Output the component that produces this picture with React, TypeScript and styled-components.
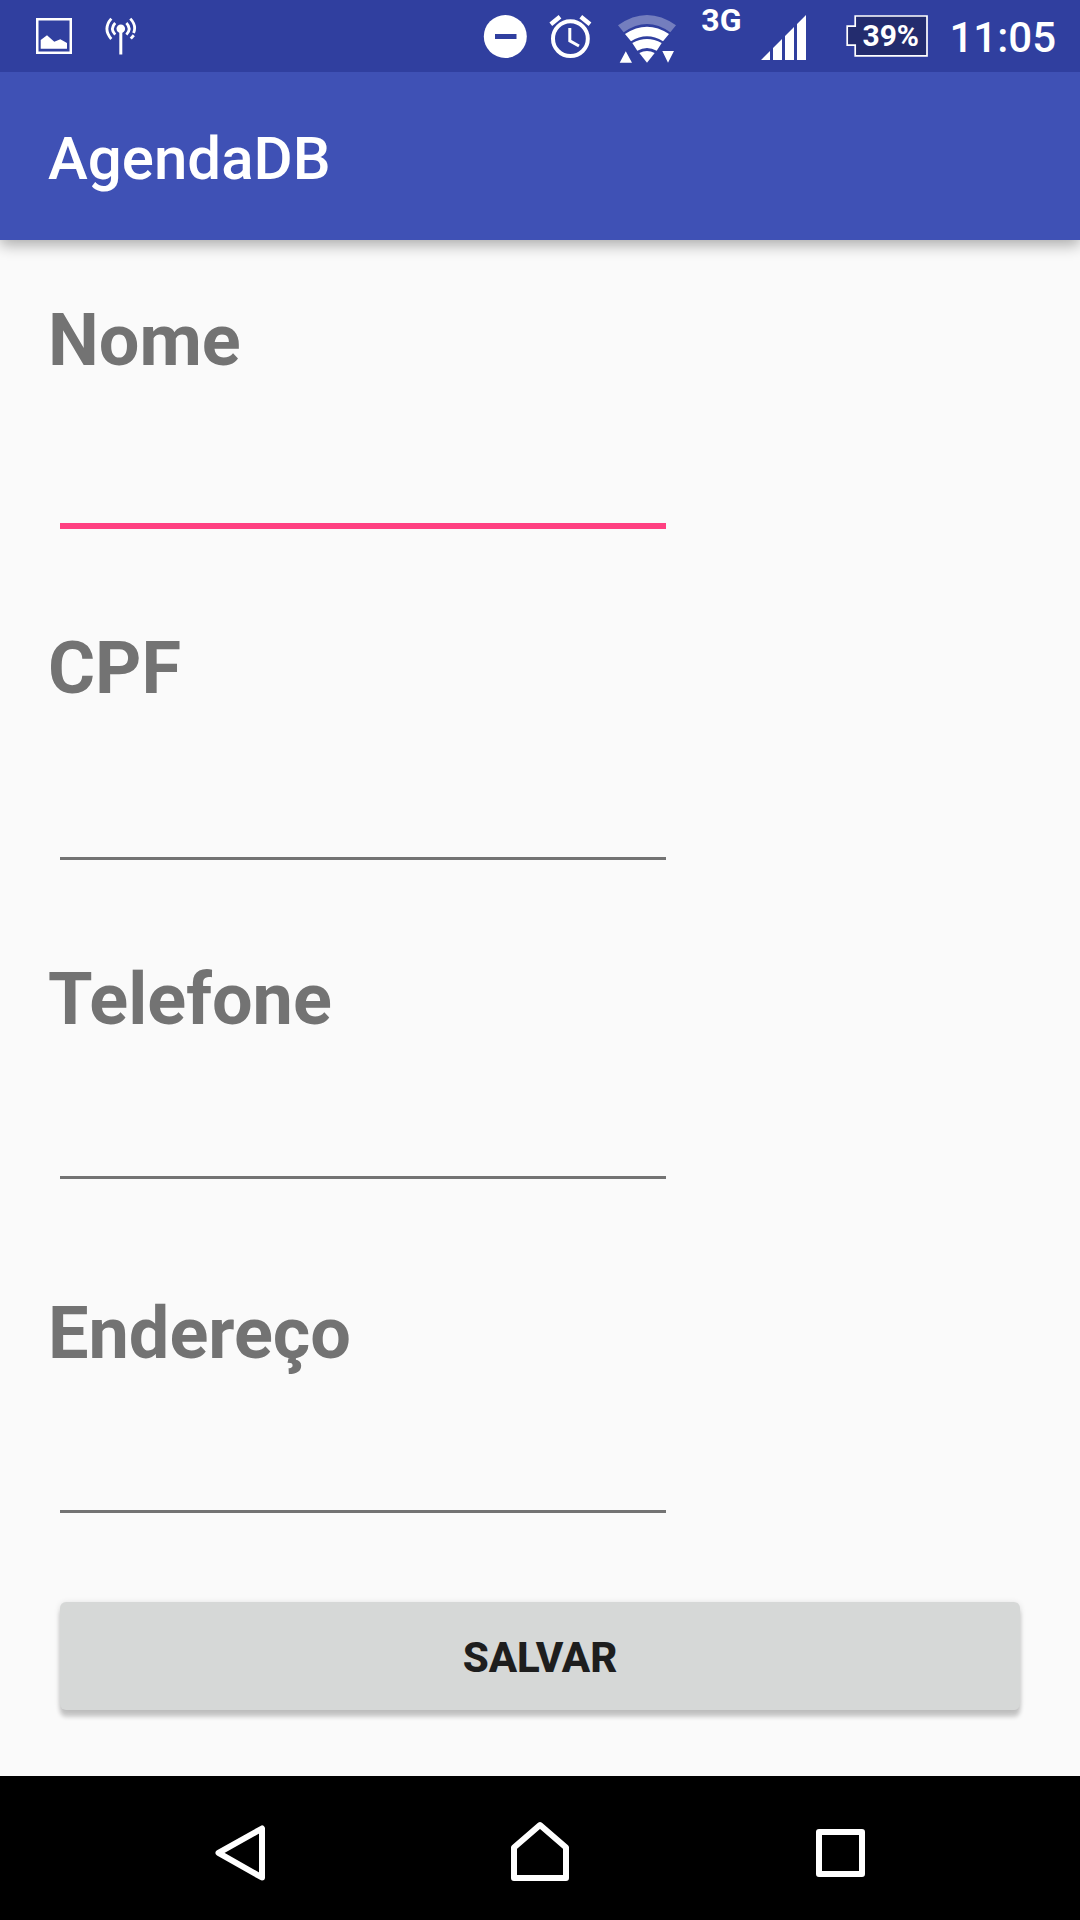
import React, { useState } from "react";
import styled, { createGlobalStyle } from "styled-components";

const GlobalStyle = createGlobalStyle`
  *, *::before, *::after { box-sizing: border-box; }
  body {
    margin: 0;
    background: #fafafa;
    font-family: Roboto, "Noto Sans", sans-serif;
  }
`;

const Screen = styled.div`
  display: flex;
  flex-direction: column;
  min-height: 100vh;
`;

const StatusBar = styled.div`
  position: relative;
  z-index: 1;
  display: flex;
  justify-content: space-between;
  height: 72px;
  padding: 0 24px 0 36px;
  background: #303f9f;
  color: #fff;
`;

const Notifications = styled.div`
  display: flex;
  gap: 33px;
`;

const SystemIcons = styled.div`
  display: flex;
  gap: 20px;
`;

const StatusIcon = styled.svg`
  display: block;
  height: 72px;
  fill: #fff;
`;

const NetworkType = styled.span`
  font-size: 32px;
  font-weight: 700;
  line-height: 40px;
`;

const Battery = styled.div`
  display: grid;
  width: 84px;
  height: 72px;

  > * { grid-area: 1 / 1; }
`;

const BatteryLevel = styled.span`
  padding-left: 17px;
  font-size: 30px;
  font-weight: 700;
  line-height: 72px;
`;

const Clock = styled.time`
  font-size: 42px;
  font-weight: 500;
  line-height: 76px;
`;

const AppBar = styled.header`
  position: relative;
  display: flex;
  align-items: center;
  height: 168px;
  padding: 6px 48px 0;
  background: #3f51b5;
  box-shadow: 0 5px 14px rgba(0, 0, 0, 0.32);
`;

const Title = styled.h1`
  margin: 0;
  color: #fff;
  font-size: 60px;
  font-weight: 500;
  line-height: 72px;
`;

const Form = styled.form`
  display: flex;
  flex: 1;
  flex-direction: column;
  padding: 58px 48px 66px;
`;

const Field = styled.div<{ $after: number }>`
  display: flex;
  flex-direction: column;
  margin-bottom: ${(p) => p.$after}px;
`;

const Label = styled.label`
  color: #737373;
  font-size: 72px;
  font-weight: 700;
  line-height: 86px;
`;

const Input = styled.input<{ $active: boolean; $height: number }>`
  width: 606px;
  max-width: calc(100% - 24px);
  height: ${(p) => p.$height}px;
  margin: 0 12px;
  padding: 0;
  border: 0;
  border-bottom: ${(p) => (p.$active ? "6px solid #ff4081" : "3px solid #737373")};
  border-radius: 0;
  outline: 0;
  background: transparent;
  color: #212121;
  font: 500 60px Roboto, "Noto Sans", sans-serif;
`;

const SaveButton = styled.button`
  height: 108px;
  margin: 0 12px;
  padding: 3px 24px 0;
  border: 0;
  border-radius: 6px;
  background: #d6d8d7;
  box-shadow: 0 7px 4px rgba(0, 0, 0, 0.19), 0 1px 6px rgba(0, 0, 0, 0.12);
  color: #1e1e1e;
  font: 800 42px/48px Roboto, "Noto Sans", sans-serif;
  text-transform: uppercase;
`;

const NavBar = styled.nav`
  display: flex;
  height: 144px;
  padding: 0 calc(100% / 12);
  background: #000;
`;

const NavButton = styled.button`
  display: flex;
  flex: 1;
  align-items: center;
  justify-content: center;
  padding: 0;
  border: 0;
  background: transparent;
`;

const NavIcon = styled.svg`
  width: 72px;
  height: 72px;
  fill: none;
  stroke: #fff;
  stroke-width: 6;
  stroke-linejoin: round;
`;

const fields = [
  { id: "nome", label: "Nome", height: 145, after: 97 },
  { id: "cpf", label: "CPF", height: 148, after: 97 },
  { id: "telefone", label: "Telefone", height: 136, after: 112 },
  { id: "endereco", label: "Endereço", height: 136, after: 89 },
];

const PictureIcon = () => (
  <StatusIcon width="36" viewBox="36 0 36 72" aria-hidden="true">
    <rect x="37.25" y="19.25" width="33.5" height="33.5" fill="none" stroke="#fff" strokeWidth="2.5" />
    <path d="M40.7 40 47 35.3 54.3 41.7 60.3 39.3 67 43V48.7H40.7Z" />
  </StatusIcon>
);

const AntennaIcon = () => (
  <StatusIcon width="32" viewBox="105 0 32 72" aria-hidden="true">
    <circle cx="120.8" cy="28.7" r="4.3" />
    <rect x="119.3" y="30" width="3" height="24.5" />
    <g fill="none" stroke="#fff" strokeWidth="2.8">
      <path d="M111.3 18.6Q102.5 28.8 111.3 39" />
      <path d="M115.2 23Q109.6 28.8 115.2 34.6" />
      <path d="M126.4 23Q132 28.8 126.4 34.6" />
      <path d="M130.3 18.6Q136.8 25.5 133.6 33" />
      <path d="M130.8 38.6 133.8 35.2" />
    </g>
  </StatusIcon>
);

const DoNotDisturbIcon = () => (
  <StatusIcon width="44" viewBox="0 0 44 72" aria-hidden="true">
    <circle cx="22.3" cy="36.5" r="21.5" />
    <rect x="12" y="34" width="21.5" height="5" fill="#303f9f" />
  </StatusIcon>
);

const AlarmIcon = () => (
  <StatusIcon width="50" viewBox="0 0 50 72" aria-hidden="true">
    <g fill="none" stroke="#fff">
      <circle cx="23.4" cy="38.7" r="17.4" strokeWidth="4" />
      <path d="M22.8 28V40.8L32 46" strokeWidth="3" />
      <path d="M3.8 24.2 13 16.8M33.8 16.8 43 24.2" strokeWidth="4.4" />
    </g>
  </StatusIcon>
);

const WifiIcon = () => (
  <StatusIcon width="64" viewBox="0 0 64 72" aria-hidden="true">
    <path opacity="0.33" d="M1 25.3Q30 4.7 59 25.3L53.3 32.3Q30 15.7 6.7 32.3Z" />
    <path d="M8 34Q30 19.4 52 34L46 41.3Q30 31.3 14 41.3Z" />
    <path d="M15.3 43Q30 35 44.7 43L39.7 50.7Q30 45.4 20.3 50.7Z" />
    <path d="M22.3 53Q30 49 37.7 53L30 62.7Z" />
    <path d="M2.7 62.7H15L8.8 51.3ZM45.3 51H57L51 62.7Z" />
  </StatusIcon>
);

const SignalIcon = () => (
  <StatusIcon width="64" viewBox="0 0 64 72" aria-hidden="true">
    <path d="M0 60H9V51ZM12 60V48L21 39V60ZM24 60V36L33 27V60ZM36 60V24L45 15V60Z" />
  </StatusIcon>
);

const BatteryOutline = () => (
  <StatusIcon width="84" viewBox="0 0 84 72" aria-hidden="true">
    <path d="M10.2 16H82V55.8H10.2V45.2H2.2V26.2H10.2Z" fill="#232c6e" stroke="#fff" strokeWidth="1.7" />
  </StatusIcon>
);

export default function App() {
  const [active, setActive] = useState("nome");

  return (
    <Screen>
      <GlobalStyle />
      <StatusBar>
        <Notifications>
          <PictureIcon />
          <AntennaIcon />
        </Notifications>
        <SystemIcons>
          <DoNotDisturbIcon />
          <AlarmIcon />
          <WifiIcon />
          <NetworkType>3G</NetworkType>
          <SignalIcon />
          <Battery>
            <BatteryOutline />
            <BatteryLevel>39%</BatteryLevel>
          </Battery>
          <Clock>11:05</Clock>
        </SystemIcons>
      </StatusBar>
      <AppBar>
        <Title>AgendaDB</Title>
      </AppBar>
      <Form onSubmit={(e) => e.preventDefault()}>
        {fields.map((f) => (
          <Field key={f.id} $after={f.after}>
            <Label htmlFor={f.id}>{f.label}</Label>
            <Input
              id={f.id}
              name={f.id}
              type="text"
              $height={f.height}
              $active={active === f.id}
              onFocus={() => setActive(f.id)}
            />
          </Field>
        ))}
        <SaveButton type="submit">Salvar</SaveButton>
      </Form>
      <NavBar>
        <NavButton type="button" aria-label="Voltar">
          <NavIcon viewBox="0 0 72 72">
            <path d="M58 16.5V65.5L14.5 40.8Z" />
          </NavIcon>
        </NavButton>
        <NavButton type="button" aria-label="Início">
          <NavIcon viewBox="0 0 72 72">
            <path d="M10 35.5 36 13 62 35.5V66H10Z" />
          </NavIcon>
        </NavButton>
        <NavButton type="button" aria-label="Recentes">
          <NavIcon viewBox="0 0 72 72">
            <rect x="15" y="20" width="43" height="42" />
          </NavIcon>
        </NavButton>
      </NavBar>
    </Screen>
  );
}
